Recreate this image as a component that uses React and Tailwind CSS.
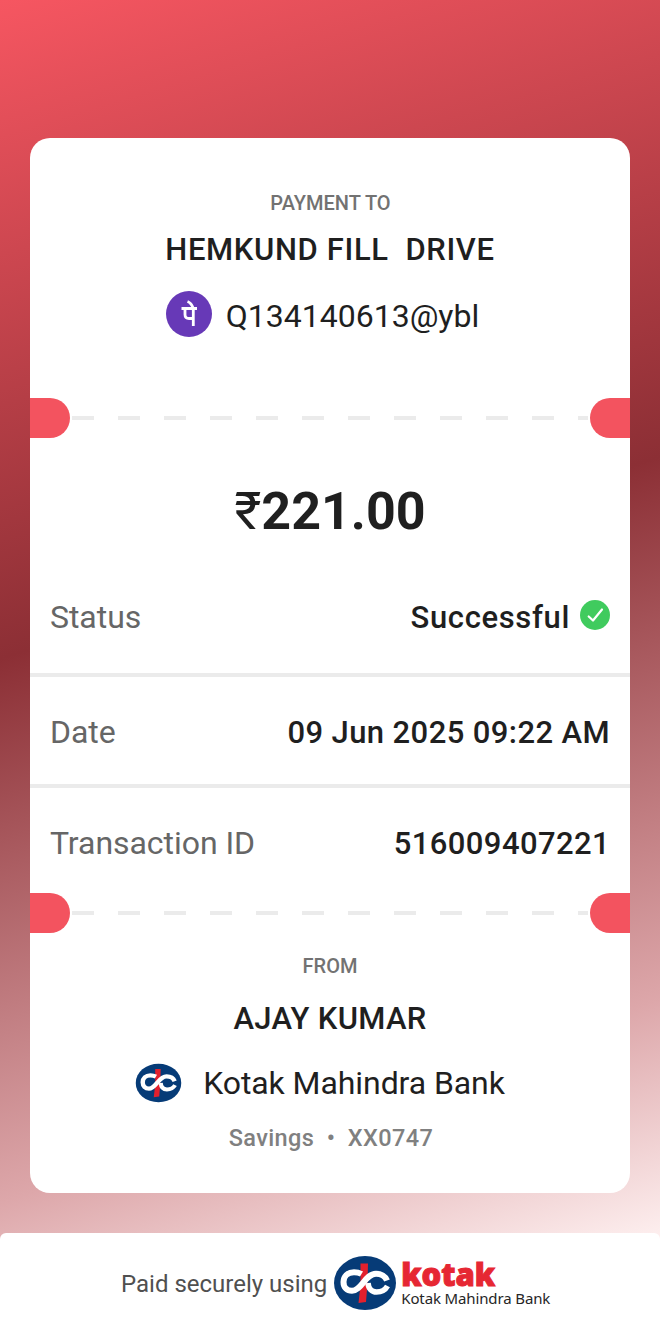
import React from "react";

function Divider() {
  return (
    <div className="flex h-10 shrink-0 items-center justify-between">
      <div className="h-10 w-10 rounded-r-full bg-[#f3535f]" />
      <svg className="h-1 w-[520px]" viewBox="0 0 520 4">
        <line x1="2" x2="518" y1="2" y2="2" stroke="#ebebeb" strokeWidth="4" strokeDasharray="22 24" />
      </svg>
      <div className="h-10 w-10 rounded-l-full bg-[#f3535f]" />
    </div>
  );
}

function BankMark({ className }) {
  return (
    <svg className={className} viewBox="0 0 64 56" preserveAspectRatio="none">
      <ellipse cx="32" cy="28" rx="31" ry="27" fill="#063b77" />
      <path d="M27.500 8.500H35L34.500 28L33 47L25.500 48L27.500 30Z" fill="#e3202d" />
      <path
        d="M28.500 19C26 17.600 24 17.200 21 17.200C14.500 17.200 10.500 21.500 10.500 27C10.500 32.500 14 35.800 19 35.800C28.500 35.800 32 18.800 43 18.800C48 18.800 52.500 21.500 54 25.500"
        fill="none" stroke="#fff" strokeWidth="6"
      />
      <path
        d="M35 28C35.500 34 39 37 43.500 37C48 37 52 35.500 54.500 31"
        fill="none" stroke="#fff" strokeWidth="5.600"
      />
    </svg>
  );
}

function Row({ label, className, children }) {
  return (
    <div className={"flex items-center justify-between px-5 " + className}>
      <span className="text-[32px] leading-10 tracking-[-0.05px] text-[#666]">{label}</span>
      {children}
    </div>
  );
}

export default function App() {
  return (
    <div className="flex h-[1333px] w-[660px] flex-col bg-white bg-[linear-gradient(163deg,#f65661_0px,#8c2f35_630px,#dda7aa_1150px,#fdeeee_1373px)] font-['Roboto','Noto_Sans',sans-serif] text-[#1f1f1f]">
      <main className="mx-[30px] mt-[138px] flex h-[1055px] flex-col overflow-hidden rounded-[20px] bg-white">
        <section className="flex h-[260px] flex-col items-center pt-[53px]">
          <div className="h-6 pl-px text-[20px] leading-6 font-medium text-[#727272]">PAYMENT TO</div>
          <div className="mt-[15px] h-10 text-[31px] leading-10 font-medium tracking-[0.64px] whitespace-pre">HEMKUND FILL  DRIVE</div>
          <div className="mt-[21px] flex h-[46px] items-center gap-[14px] pr-[15px]">
            <svg className="size-[46px]" viewBox="0 0 46 46">
              <circle cx="23" cy="23" r="23" fill="#6739b7" />
              <path d="M15.500 17.500H31M21.500 10.500Q25.500 12 27.300 17.500M27.300 17V35M19 17.500V23.500Q19 27.500 23 27.500H27.300" fill="none" stroke="#fff" strokeWidth="2.800" />
            </svg>
            <span className="pt-1 text-[32px] leading-10">Q134140613@ybl</span>
          </div>
        </section>
        <Divider />
        <section className="flex h-[455px] flex-col">
          <div className="flex h-[118px] items-center justify-center pt-[30px]">
            <span className="text-[52px] leading-[60px] font-bold"><span className="font-normal">₹</span>221.00</span>
          </div>
          <Row label="Status" className="h-[117px] pt-1">
            <span className="flex items-center gap-[10px] text-[31px] leading-10 font-medium tracking-[0.65px]">
              <span className="pt-[2px]">Successful</span>
              <svg className="-mt-1 size-[30px]" viewBox="0 0 30 30">
                <circle cx="15" cy="15" r="15" fill="#40cb5e" />
                <path d="M8.700 16.500L13 20.500L22 9.500" fill="none" stroke="#fff" strokeWidth="2.200" strokeLinecap="round" strokeLinejoin="round" />
              </svg>
            </span>
          </Row>
          <Row label="Date" className="h-[115px] border-y-4 border-[#ebebeb] pt-[2px]">
            <span className="pt-[2px] text-[31px] leading-10 font-medium tracking-[0.4px]">09 Jun 2025 09:22 AM</span>
          </Row>
          <Row label="Transaction ID" className="h-[105px] pt-1">
            <span className="pt-[2px] text-[31px] leading-10 font-medium tracking-[0.4px]">516009407221</span>
          </Row>
        </section>
        <Divider />
        <section className="flex flex-1 flex-col items-center pt-[21px]">
          <div className="h-6 text-[20px] leading-6 font-medium text-[#727272]">FROM</div>
          <div className="mt-[21px] h-10 text-[31px] leading-10 font-medium tracking-[0.3px]">AJAY KUMAR</div>
          <div className="mt-6 flex h-10 items-center gap-[21px] pr-5">
            <BankMark className="h-10 w-[47px]" />
            <span className="text-[32px] leading-10 tracking-[-0.08px]">Kotak Mahindra Bank</span>
          </div>
          <div className="mt-5 pl-[2px] text-[23.5px] leading-[30px] font-medium tracking-[0.4px] whitespace-pre text-[#808080]">Savings  •  XX0747</div>
        </section>
      </main>
      <footer className="mt-10 flex h-[100px] items-center rounded-t-[6px] bg-white pl-[121px]">
        <span className="pt-[2px] text-[24px] leading-[30px] whitespace-nowrap text-[#505050]">Paid securely using</span>
        <BankMark className="ml-[6px] h-[56px] w-[64px] shrink-0" />
        <div className="ml-1 flex flex-col">
          <span className="h-7 font-['Open_Sans',sans-serif] text-[31px] leading-7 font-extrabold tracking-[-0.1px] text-[#e62733] [-webkit-text-stroke:1px_#e62733]">kotak</span>
          <span className="mt-[2px] h-4 font-['Noto_Sans',sans-serif] text-[15px] leading-4 tracking-[-0.13px] whitespace-nowrap text-[#262626]">Kotak Mahindra Bank</span>
        </div>
      </footer>
    </div>
  );
}
